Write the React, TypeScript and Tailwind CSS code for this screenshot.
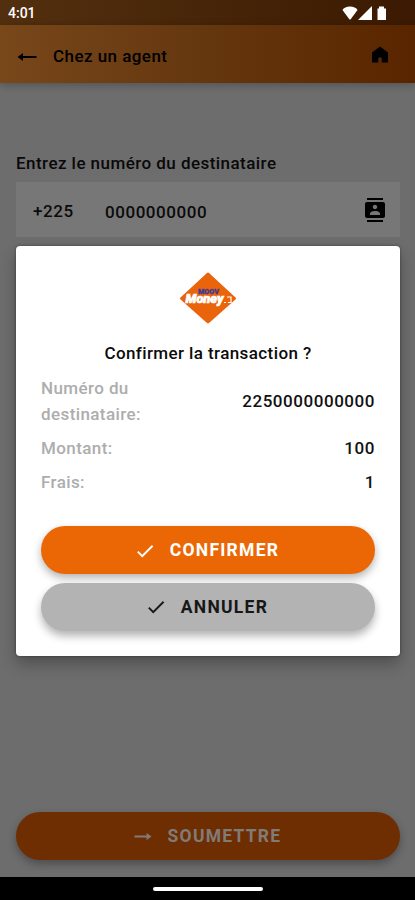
import type { ReactNode } from 'react';
import { MdCheck, MdContacts } from 'react-icons/md';
import { clsx } from 'clsx';

const details = [
  { label: 'Numéro du destinataire:', value: '2250000000000' },
  { label: 'Montant:', value: '100' },
  { label: 'Frais:', value: '1' },
];

function StatusBar() {
  return (
    <div className="flex h-[25px] items-center justify-between bg-gradient-to-r from-[#52300f] to-[#3c1a03] pl-2 pr-[26px]">
      <span className="pt-px text-[14px] font-medium leading-none text-white">4:01</span>
      <svg className="h-[16px] w-[48px]" viewBox="0 0 48 16" fill="white">
        <path d="M1.500 5C3.500.2 14.500.2 16.500 5L9.500 14.500H8.500Z" />
        <path d="M31 1v14H17Z" />
        <path d="M36.500 3.500h1.500V1.500h5v2h2v11.500h-8.500Z" />
      </svg>
    </div>
  );
}

// Long thin arrow with a small solid head, pointing right
function ThinArrow({ className }: { className?: string }) {
  return (
    <svg className={className} viewBox="0 0 20 10" fill="currentColor">
      <path d="M.5 4H14V1L19.500 5 14 9V6H.5Z" />
    </svg>
  );
}

function AppHeader() {
  return (
    <header className="flex h-[58px] items-center bg-gradient-to-r from-[#78471a] via-[#65370f] to-[#592500] pl-[17px] pr-[25px] pt-[3px] text-black shadow-[0_2px_8px_rgba(0,0,0,0.25)]">
      <ThinArrow className="mt-[2px] h-[10px] w-5 rotate-180" />
      <h1 className="ml-4 text-[17px] font-medium leading-6 tracking-[0.45px]">Chez un agent</h1>
      <svg className="mb-[3px] ml-auto h-[17px] w-5" viewBox="0 0 20 17" fill="currentColor">
        <path d="M10 .5 18 6.500V16.500H11.700V13a1.700 1.700 0 0 0-3.400 0v3.500H2V6.500Z" />
      </svg>
    </header>
  );
}

function MoneyLogo() {
  return (
    <svg className="mx-auto h-[54px] w-[62px]" viewBox="0 0 62 54">
      <path d="M31 3 57.500 27.500 31 51 4.500 27.500Z" fill="#ea640c" stroke="#ea640c" strokeWidth="3" strokeLinejoin="round" />
      <text x="21" y="22.500" textLength="21" lengthAdjust="spacingAndGlyphs" fontSize="7" fontWeight="900" fill="#3b3995" stroke="#3b3995" strokeWidth="0.300">MOOV</text>
      <text x="8.500" y="32" textLength="38" lengthAdjust="spacingAndGlyphs" fontSize="13" fontWeight="900" fontStyle="italic" fill="white" stroke="white" strokeWidth="0.700">Money</text>
      <path d="M50 26h4v5.500h-3M47 31.500h2" fill="none" stroke="white" strokeWidth="1.200" />
    </svg>
  );
}

type PillButtonProps = { icon: ReactNode; label: string; className?: string };

function PillButton({ icon, label, className }: PillButtonProps) {
  return (
    <button
      className={clsx(
        'flex h-12 w-full shrink-0 items-center justify-center gap-[14px] rounded-full text-[17.5px] font-bold tracking-[1.25px]',
        className
      )}
    >
      {icon}
      {label}
    </button>
  );
}

function ConfirmDialog() {
  return (
    <div className="absolute left-4 right-[15px] top-[246px] flex h-[410px] flex-col rounded bg-white px-[25px] pt-[25px] shadow-[0_8px_16px_rgba(0,0,0,0.28),0_0_3px_rgba(0,0,0,0.4)]">
      <MoneyLogo />
      <h2 className="mt-4 text-center text-[17px] font-medium leading-6 tracking-[0.4px] text-[#0c0c0c]">
        Confirmer la transaction ?
      </h2>
      <dl className="mt-[10px] space-y-2">
        {details.map(({ label, value }) => (
          <div key={label} className="flex items-center justify-between text-[17px] font-medium leading-[26px]">
            <dt className="w-[130px] tracking-[0.4px] text-[#adadad]">{label}</dt>
            <dd className="tracking-[0.55px] text-[#111]">{value}</dd>
          </div>
        ))}
      </dl>
      <div className="mt-[31px] space-y-[9px]">
        <PillButton
          icon={<MdCheck className="h-[22px] w-[22px]" />}
          label="CONFIRMER"
          className="bg-[#eb6706] pr-[3px] pt-px text-white shadow-[0_4px_8px_rgba(0,0,0,0.3)]"
        />
        <PillButton
          icon={<MdCheck className="h-[22px] w-[22px]" />}
          label="ANNULER"
          className="bg-[#b3b3b3] pr-[3px] text-[#171717] shadow-[0_5px_9px_rgba(0,0,0,0.3)]"
        />
      </div>
    </div>
  );
}

export default function App() {
  return (
    <div className="relative flex h-[900px] w-[415px] flex-col overflow-hidden bg-[#6d6d6d] font-['Roboto',sans-serif]">
      <StatusBar />
      <AppHeader />

      <main className="flex flex-1 flex-col pb-[17px] pl-4 pr-[15px] pt-[68px]">
        <label className="text-[17px] font-medium leading-6 tracking-[0.45px] text-[#090909]">
          Entrez le numéro du destinataire
        </label>
        <div className="mt-[7px] flex h-[55px] items-center bg-[#777] pl-[17px] pr-[13px] text-[17px] font-medium tracking-[0.55px] text-[#0b0b0b]">
          <span className="w-[72px] pt-[4px]">+225</span>
          <span className="pt-[7px]">0000000000</span>
          <MdContacts className="ml-auto h-6 w-6 text-black" />
        </div>
        <div className="mt-auto">
          <PillButton
            icon={<ThinArrow className="mr-[2px] h-[9px] w-[18px]" />}
            label="SOUMETTRE"
            className="bg-[#6e2e02] pr-px text-[#817b77] shadow-[0_4px_8px_rgba(0,0,0,0.3)]"
          />
        </div>
      </main>

      {/* System navigation */}
      <div className="flex h-[23px] items-center justify-center bg-black">
        <div className="h-1 w-[110px] rounded-full bg-white" />
      </div>

      <ConfirmDialog />
    </div>
  );
}
